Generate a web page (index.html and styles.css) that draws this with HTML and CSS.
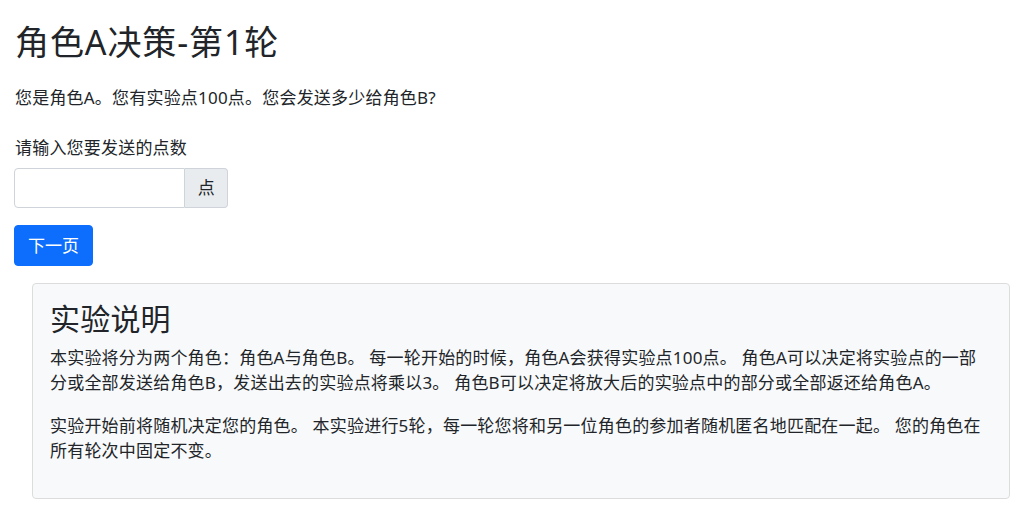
FILE: index.html
```html
<!DOCTYPE html>
<html lang="zh-CN">
  <head>
    <meta charset="UTF-8" />
    <meta name="viewport" content="width=device-width, initial-scale=1.0" />
    <title>角色A决策-第1轮</title>
    <link rel="stylesheet" href="styles.css">
  </head>
  <body>
    <main class="container">
      <h2 class="page-title">角色A决策-第1轮</h2>

      <form>
        <p>您是角色A。您有实验点100点。您会发送多少给角色B?</p>

        <div class="field">
          <label for="id_sent" class="field-label">请输入您要发送的点数</label>
          <div class="input-group">
            <input type="number" id="id_sent" class="input" />
            <span class="input-addon">点</span>
          </div>
        </div>

        <button type="button" class="btn-next">下一页</button>
      </form>

      <!-- instruktioner -->
      <section class="instructions">
        <h3>实验说明</h3>
        <p>
          本实验将分为两个角色：角色A与角色B。
          每一轮开始的时候，角色A会获得实验点100点。
          角色A可以决定将实验点的一部分或全部发送给角色B，发送出去的实验点将乘以3。
          角色B可以决定将放大后的实验点中的部分或全部返还给角色A。
        </p>
        <p>
          实验开始前将随机决定您的角色。
          本实验进行5轮，每一轮您将和另一位角色的参加者随机匿名地匹配在一起。
          您的角色在所有轮次中固定不变。
        </p>
      </section>
    </main>
  </body>
</html>
```

FILE: styles.css
```css
* {
  padding: 0;
  margin: 0;
  box-sizing: border-box;
}

body {
  font-family: "Noto Sans", "Noto Sans CJK SC", sans-serif;
  font-size: 17px;
  line-height: 1.5;
  letter-spacing: 0.2px;
  color: #212529;
  background-color: #fff;
}

.container {
  padding: 22px 14px 0 14px;
}

.page-title {
  font-size: 34px;
  font-weight: 400;
  line-height: 1.2;
  letter-spacing: 0.9px;
  margin-left: 1px;
  margin-bottom: 22px;
}

form p {
  margin-left: 1px;
  margin-bottom: 25px;
}

.field {
  margin-bottom: 17px;
}

.field-label {
  display: block;
  margin-left: 1px;
  margin-bottom: 7px;
}

/* input med enhed */

.input-group {
  display: flex;
  width: 214px;
}

.input {
  flex: 1;
  min-width: 0;
  height: 40px;
  padding: 6px 12px;
  font: inherit;
  color: #212529;
  border: 1px solid #ced4da;
  border-radius: 4px 0 0 4px;
  outline: none;
}

.input-addon {
  display: flex;
  align-items: center;
  padding: 0 12px 0 13px;
  background-color: #e9ecef;
  border: 1px solid #ced4da;
  border-left: none;
  border-radius: 0 4px 4px 0;
}

.btn-next {
  height: 41px;
  padding: 0 13px;
  font: inherit;
  color: #fff;
  background-color: #0d6efd;
  border: 1px solid #0d6efd;
  border-radius: 4px;
}

/* boks med instruktioner */

.instructions {
  margin: 17px 0 0 18px;
  padding: 17px 25px 0 17px;
  background-color: #f8f9fa;
  border: 1px solid #dcdcdc;
  border-radius: 4px;
}

.instructions h3 {
  font-size: 30px;
  font-weight: 400;
  line-height: 1.2;
  margin-bottom: 8px;
}

.instructions p {
  margin-bottom: 17px;
}

.instructions p:last-child {
  margin-bottom: 34px;
}
```
